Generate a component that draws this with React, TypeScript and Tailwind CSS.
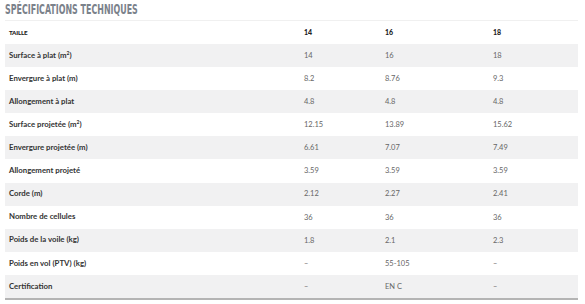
const rows: [React.ReactNode, string, string, string][] = [
  [<>Surface à plat (m<sup className="text-[5px]">2</sup>)</>, '14', '16', '18'],
  ['Envergure à plat (m)', '8.2', '8.76', '9.3'],
  ['Allongement à plat', '4.8', '4.8', '4.8'],
  [<>Surface projetée (m<sup className="text-[5px]">2</sup>)</>, '12.15', '13.89', '15.62'],
  ['Envergure projetée (m)', '6.61', '7.07', '7.49'],
  ['Allongement projeté', '3.59', '3.59', '3.59'],
  ['Corde (m)', '2.12', '2.27', '2.41'],
  ['Nombre de cellules', '36', '36', '36'],
  ['Poids de la voile (kg)', '1.8', '2.1', '2.3'],
  ['Poids en vol (PTV) (kg)', '–', '55-105', '–'],
  ['Certification', '–', 'EN C', '–'],
]

const cols = 'grid grid-cols-[299px_81px_108px_85px]'

export default function App() {
  return (
    <div className="w-[585px] h-[304px] bg-white font-['Lato','Liberation_Sans',sans-serif] overflow-hidden">
      <div className="h-[20px] pl-[5px] pt-[1px]">
        <h2 className="origin-left scale-x-[0.63] whitespace-nowrap font-['DejaVu_Sans_Condensed','DejaVu_Sans',sans-serif] font-bold text-[14px] leading-[17px] text-[#7b828b] uppercase">
          Spécifications techniques
        </h2>
      </div>
      <div className="ml-[5px] w-[573px] border-t border-[#f0f0f0] border-b-2 border-b-[#b4b4b4]">
        <div className={`${cols} h-[23px] items-center bg-white`}>
          <div className="pl-[4px] text-[6.2px] font-black text-[#222] uppercase tracking-[-0.2px]">Taille</div>
          <div className="text-[7px] font-black text-[#222]">14</div>
          <div className="text-[7px] font-black text-[#222]">16</div>
          <div className="text-[7px] font-black text-[#222]">18</div>
        </div>
        {rows.map((r, i) => (
          <div
            key={i}
            className={`${cols} h-[23.1px] items-center ${i % 2 === 0 ? 'bg-[#f1f1f2]' : 'bg-white'}`}
          >
            <div className="pl-[4px] text-[7.8px] font-bold text-[#333] whitespace-nowrap">{r[0]}</div>
            <div className="text-[7.5px] text-[#666]">{r[1]}</div>
            <div className="text-[7.5px] text-[#666]">{r[2]}</div>
            <div className="text-[7.5px] text-[#666]">{r[3]}</div>
          </div>
        ))}
      </div>
    </div>
  )
}
